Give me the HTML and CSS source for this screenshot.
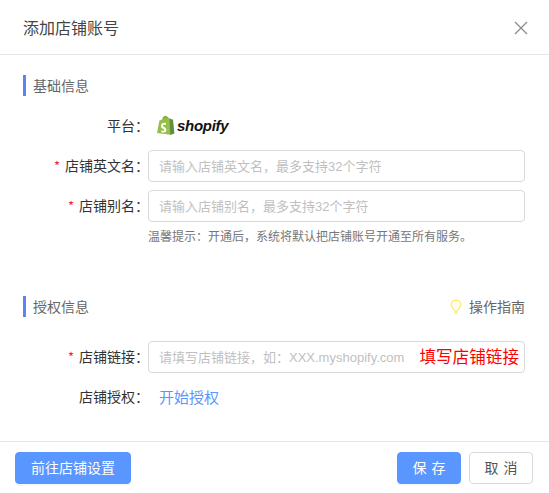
FILE: index.html
```html
<!DOCTYPE html>
<html>
<head>
  <meta charset="utf-8">
  <title>添加店铺账号</title>
  <link rel="stylesheet" href="styles.css">
</head>
<body>
  <div class="dialog">
    <div class="dialog-header">
      <span class="dialog-title">添加店铺账号</span>
      <svg class="close-icon" width="14" height="14" viewBox="0 0 14 14">
        <path d="M1 1L13 13M13 1L1 13" stroke="#8c8c8c" stroke-width="1.3" fill="none"/>
      </svg>
    </div>

    <div class="dialog-body">
      <div class="section-title"><span>基础信息</span></div>

      <div class="form-row platform-row">
        <label class="form-label">平台：</label>
        <div class="shopify-logo">
          <svg width="20" height="21" viewBox="0 0 20 21">
            <path d="M2 18L4.4 5.6C6 5 6.8 4.6 7.4 4C8 1.6 9.4 .6 10.6 .8C11.4 .9 11.8 1.4 12.2 1.8C12.8 1.7 13.6 2.4 14 3.6L15 3.5L15.6 19.8Z" fill="#95bf47"/>
            <path d="M14.6 3.5L15.4 3.5L16 4.2L18 4.6L19.4 18.6L15.2 20Z" fill="#5e8e3e"/>
            <path d="M11.2 8.2L10.8 10C9.4 9.4 7.8 9.8 7.9 10.8C8 12 11.6 12.2 11.4 15.2C11.2 17.6 8.4 18.2 6.2 17L6.6 15.2C7.8 16 9.4 16.2 9.4 15.1C9.4 13.6 6.1 13.8 6 10.9C5.9 8.4 8.9 7.2 11.2 8.2Z" fill="#fff"/>
            <path d="M8.4 4C8.8 2.4 9.6 1.6 10.6 1.6M11.2 3.2C11.2 2.6 11.2 2 11 1.6M12.4 3C12.4 2.6 12.2 2.2 12 2" stroke="#5e8e3e" stroke-width=".6" fill="none"/>
          </svg>
          <span class="shopify-word">shopify</span>
        </div>
      </div>

      <div class="form-row">
        <label class="form-label"><i class="required">*</i>店铺英文名：</label>
        <div class="input-box"><span class="placeholder">请输入店铺英文名，最多支持32个字符</span></div>
      </div>

      <div class="form-row">
        <label class="form-label"><i class="required">*</i>店铺别名：</label>
        <div class="input-box"><span class="placeholder">请输入店铺别名，最多支持32个字符</span></div>
      </div>

      <p class="form-hint">温馨提示：开通后，系统将默认把店铺账号开通至所有服务。</p>

      <div class="section-title section-auth">
        <span>授权信息</span>
        <a class="guide-link">
          <svg width="12" height="16" viewBox="0 0 14 18">
            <path d="M4.5 12.5C4.4 10.8 1.2 9.6 1.2 6.2C1.2 3.2 3.8 1 7 1C10.2 1 12.8 3.2 12.8 6.2C12.8 9.6 9.6 10.8 9.5 12.5Z" fill="#fffef0" stroke="#ffeb66" stroke-width="1.4"/>
            <path d="M4.6 14.7H9.4M5.6 16.6H8.4" stroke="#ffeb66" stroke-width="1.3" fill="none"/>
          </svg>
          操作指南
        </a>
      </div>

      <div class="form-row">
        <label class="form-label"><i class="required">*</i>店铺链接：</label>
        <div class="input-box">
          <span class="placeholder">请填写店铺链接，如：XXX.myshopify.com</span>
          <span class="input-note">填写店铺链接</span>
        </div>
      </div>

      <div class="form-row auth-row">
        <label class="form-label">店铺授权：</label>
        <a class="auth-link">开始授权</a>
      </div>
    </div>

    <div class="dialog-footer">
      <button class="btn btn-primary btn-settings">前往店铺设置</button>
      <div class="footer-right">
        <button class="btn btn-primary">保 存</button>
        <button class="btn btn-cancel">取 消</button>
      </div>
    </div>
  </div>
</body>
</html>
```

FILE: styles.css
```css
* {
  box-sizing: border-box;
}

body {
  margin: 0;
  background-color: #fff;
  color: #333;
  font-family: "Noto Sans CJK SC", "Liberation Sans", sans-serif;
  font-size: 14px;
}

.dialog {
  width: 549px;
  height: 493px;
  display: flex;
  flex-direction: column;
  background-color: #fff;
}

.dialog-header {
  height: 55px;
  flex: none;
  display: flex;
  align-items: center;
  justify-content: space-between;
  padding: 2px 21px 0 23px;
  border-bottom: 1px solid #e8e8e8;
}

.dialog-title {
  font-size: 16px;
  color: #444;
  margin-top: -2px;
}

.dialog-body {
  flex: 1;
  padding: 20px 24px 0 23px;
}

.section-title {
  height: 21px;
  display: flex;
  align-items: center;
  justify-content: space-between;
  padding-left: 7px;
  border-left: 3px solid #5b84f1;
  color: #666;
  line-height: 21px;
}

.section-auth {
  margin-top: 50px;
  margin-bottom: 24px;
}

.form-row {
  display: flex;
  align-items: center;
  height: 32px;
  margin-bottom: 8px;
}

.platform-row {
  margin-top: 14px;
  margin-bottom: 8px;
}

.form-label {
  width: 126px;
  flex: none;
  margin-right: -1px;
  padding-bottom: 2px;
  text-align: right;
  color: #333;
}

.required {
  font-style: normal;
  font-size: 13px;
  color: #f5222d;
  margin-right: 5px;
}

.shopify-logo {
  display: flex;
  align-items: center;
  margin-left: 7px;
  padding-bottom: 2px;
}

.shopify-word {
  font-family: "Liberation Sans", sans-serif;
  font-size: 15px;
  font-weight: bold;
  font-style: italic;
  color: #111;
  margin-left: 2px;
  letter-spacing: -.3px;
}

.input-box {
  flex: 1;
  height: 32px;
  display: flex;
  align-items: center;
  justify-content: space-between;
  padding: 0 5px 2px 10px;
  border: 1px solid #d9d9d9;
  border-radius: 4px;
  background-color: #fff;
}

.placeholder {
  font-family: "Liberation Sans", "Noto Sans CJK SC", sans-serif;
  font-size: 13px;
  color: #bfbfbf;
}

.input-note {
  color: #f00;
  font-size: 16.6px;
}

.form-hint {
  margin: -4px 0 0 125px;
  font-size: 12px;
  line-height: 20px;
  color: #777;
}

.guide-link {
  display: flex;
  align-items: center;
  gap: 7px;
  color: #666;
}

.auth-row {
  margin-bottom: 0;
}

.auth-link {
  margin-left: 11px;
  padding-bottom: 2px;
  font-size: 15px;
  color: #5b96ff;
}

.dialog-footer {
  height: 52px;
  flex: none;
  display: flex;
  justify-content: space-between;
  padding: 10px 16px 0 15px;
  border-top: 1px solid #e8e8e8;
}

.footer-right {
  display: flex;
  gap: 8px;
}

.btn {
  height: 32px;
  width: 64px;
  padding: 0 0 2px;
  border-radius: 4px;
  font-family: inherit;
  font-size: 14px;
  word-spacing: 2px;
}

.btn-primary {
  background-color: #5996ff;
  border: 1px solid #5996ff;
  color: #fff;
  box-shadow: 0 2px 0 rgba(0, 0, 0, 0.03);
}

.btn-settings {
  width: 116px;
}

.btn-cancel {
  background-color: #fff;
  border: 1px solid #d9d9d9;
  color: #555;
}
```
